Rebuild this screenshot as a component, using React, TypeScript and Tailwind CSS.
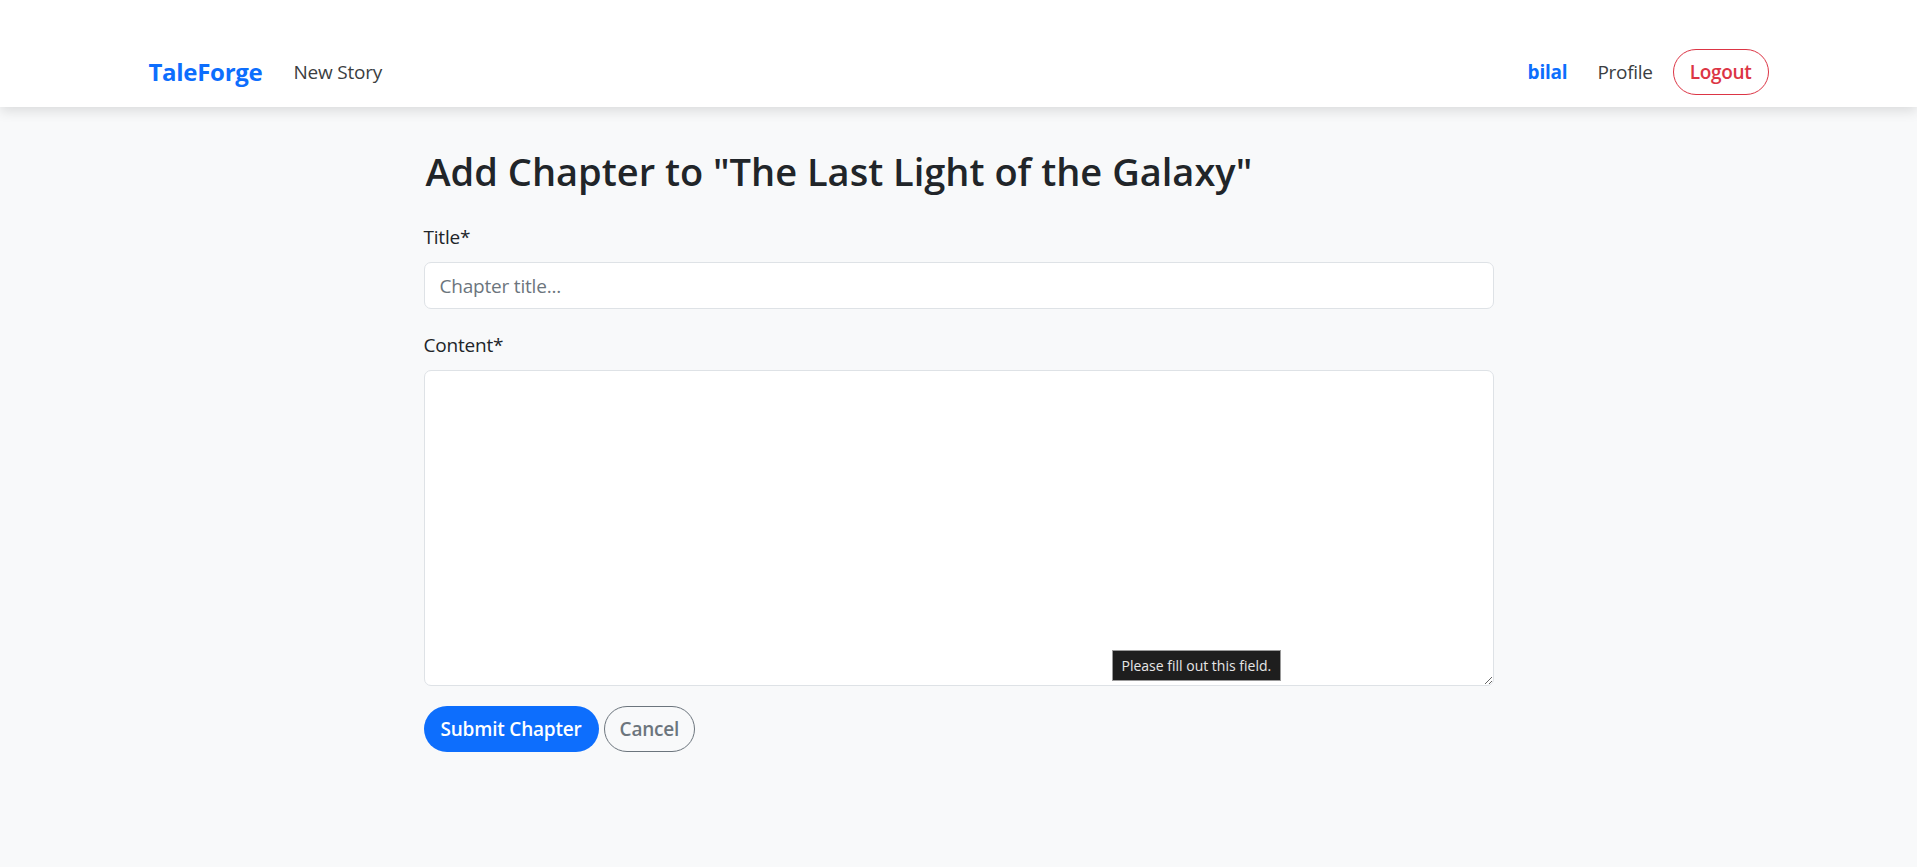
import React from 'react'

const font = { fontFamily: '"Open Sans", "Noto Sans", sans-serif' }

function Navbar() {
  return (
    <nav className="bg-white shadow-[0_4px_12px_rgba(0,0,0,0.12)] pt-[49px] pb-[12px]">
      <div className="mx-auto w-[1650px] px-[15px] flex items-center justify-between h-[46px]">
        <div className="flex items-center">
          <a href="#" className="text-[24px] font-bold text-[#0d6efd] tracking-[-0.3px]">
            TaleForge
          </a>
          <a href="#" className="ml-[31px] text-[19px] text-[#3b3e41] tracking-[-0.2px]">
            New Story
          </a>
        </div>
        <div className="flex items-center">
          <span className="text-[19px] font-bold text-[#0d6efd] tracking-[-0.2px]">bilal</span>
          <a href="#" className="ml-[30px] text-[19px] text-[#3b3e41] tracking-[-0.3px]">
            Profile
          </a>
          <button className="ml-[20px] h-[46px] px-[16px] rounded-full border border-[#dc3545] text-[#dc3545] text-[19px] font-semibold tracking-[-0.3px]">
            Logout
          </button>
        </div>
      </div>
    </nav>
  )
}

export default function App() {
  return (
    <div className="min-h-[867px] bg-[#f8f9fa] text-[#212529]" style={font}>
      <Navbar />
      <main className="mx-auto w-[1070px] pt-[40px]">
        <h2 className="text-[38px] font-semibold leading-[48px] pl-[2px]">
          Add Chapter to "The Last Light of the Galaxy"
        </h2>
        <form className="mt-[27px]" onSubmit={(e) => e.preventDefault()}>
          <label className="block text-[19px] leading-[30px] mb-[10px] tracking-[-0.2px]">Title*</label>
          <input
            type="text"
            placeholder="Chapter title..."
            className="block w-full h-[47px] px-[15px] text-[19px] tracking-[-0.2px] bg-white border border-[#dee2e6] rounded-[7px] placeholder:text-[#6c757d] outline-none"
          />
          <label className="block text-[19px] leading-[30px] mt-[21px] mb-[10px] tracking-[-0.2px]">Content*</label>
          <div className="relative">
            <textarea className="block w-full h-[316px] px-[15px] py-[8px] text-[19px] bg-white border border-[#dee2e6] rounded-[7px] resize-y outline-none" />
            <div className="absolute left-[688px] top-[280px] bg-[#1e1e1e] border border-[#9a9a9a] px-[9px] h-[31px] flex items-center text-[14px] text-[#e6e6e6]">
              Please fill out this field.
            </div>
          </div>
          <div className="mt-[20px] flex items-center gap-[5px]">
            <button className="h-[46px] px-[17px] rounded-full bg-[#0d6efd] text-white text-[19px] font-semibold tracking-[-0.2px]">
              Submit Chapter
            </button>
            <button className="h-[46px] px-[15px] rounded-full border border-[#6c757d] text-[#6c757d] text-[19px] font-semibold tracking-[-0.2px]">
              Cancel
            </button>
          </div>
        </form>
      </main>
    </div>
  )
}
